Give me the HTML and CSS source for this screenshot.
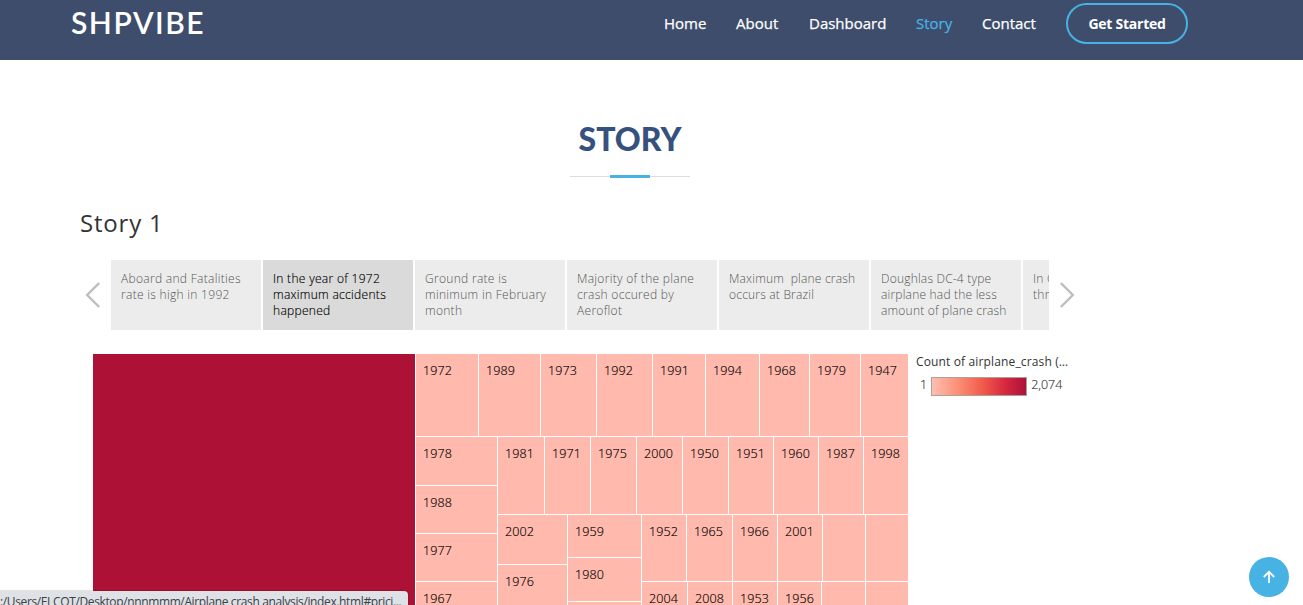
FILE: index.html
```html
<!DOCTYPE html>
<html lang="en">
<head>
<meta charset="utf-8">
<title>SHPVIBE</title>
<link rel="stylesheet" href="styles.css">
</head>
<body>
<header class="header">
  <a class="logo">SHPVIBE</a>
  <nav class="nav">
    <a class="n-home">Home</a><a class="n-about">About</a><a class="n-dash">Dashboard</a><a class="n-story active">Story</a><a class="n-contact">Contact</a>
    <a class="cta">Get Started</a>
  </nav>
</header>
<main class="main">
  <h2 class="section-title">STORY</h2>
  <div class="rule"><span class="rule-accent"></span></div>
  <section class="viz">
    <h3 class="viz-title">Story 1</h3>
    <div class="points">
      <svg class="arrow" width="16" height="28" viewBox="0 0 16 28"><path d="M14.2 2 2.2 14l12 12"/></svg>
      <div class="strip">
        <div class="point">Aboard and Fatalities<br>rate is high in 1992</div>
        <div class="point selected">In the year of 1972<br>maximum accidents<br>happened</div>
        <div class="point">Ground rate is<br>minimum in February<br>month</div>
        <div class="point">Majority of the plane<br>crash occured by<br>Aeroflot</div>
        <div class="point narrow">Maximum &nbsp;plane crash<br>occurs at Brazil</div>
        <div class="point narrow">Doughlas DC-4 type<br>airplane had the less<br>amount of plane crash</div>
        <div class="point">In C<br>thre</div>
      </div>
      <svg class="arrow" width="16" height="28" viewBox="0 0 16 28"><path d="M1.8 2l12 12-12 12"/></svg>
    </div>
    <div class="chart">
      <div class="treemap">
        <div class="big"></div>
        <div class="right">
          <div class="row1"><i>1972</i><i>1989</i><i>1973</i><i>1992</i><i>1991</i><i>1994</i><i>1968</i><i>1979</i><i>1947</i></div>
          <div class="lower">
            <div class="stack stack-a"><i>1978</i><i>1988</i><i>1977</i><i>1967</i></div>
            <div class="rest">
              <div class="row2"><i>1981</i><i>1971</i><i>1975</i><i>2000</i><i>1950</i><i>1951</i><i>1960</i><i>1987</i><i>1998</i></div>
              <div class="row3">
                <div class="stack stack-b"><i>2002</i><i>1976</i></div>
                <div class="stack stack-c"><i>1959</i><i>1980</i><i></i></div>
                <div class="stack stack-d">
                  <div class="row4"><i>1952</i><i>1965</i><i>1966</i><i>2001</i><i></i><i></i></div>
                  <div class="row5"><i>2004</i><i>2008</i><i>1953</i><i>1956</i><i></i><i></i></div>
                </div>
              </div>
            </div>
          </div>
        </div>
      </div>
      <aside class="legend">
        <div class="legend-title">Count of airplane_crash (…</div>
        <div class="legend-scale"><span>1</span><span class="ramp"></span><span>2,074</span></div>
      </aside>
    </div>
  </section>
</main>
<div class="status"><span>:/Users/ELCOT/Desktop/nnnmmm/Airplane crash analysis/index.html#prici...</span></div>
<a class="to-top"><svg width="14" height="14" viewBox="0 0 14 14"><path d="M7 13V2M1.8 7 7 1.8 12.2 7"/></svg></a>
</body>
</html>
```
FILE: styles.css
```css
* { box-sizing: border-box; }
html, body { margin: 0; height: 605px; overflow: hidden; background: #fff; }
body { font-family: "Open Sans", sans-serif; position: relative; }

.header { height: 60px; background: #3e4d6b; display: flex; align-items: flex-start; justify-content: space-between; padding: 0 115px 0 71px; }
.logo { font: 600 30px/44px Lato, sans-serif; letter-spacing: 1.5px; color: #fff; }
.nav { display: flex; align-items: center; padding-top: 3px; color: #fff; font-size: 15px; line-height: 41px; white-space: nowrap; -webkit-text-stroke: 0.25px; }
.n-home { width: 72px; }
.n-about { width: 73px; }
.n-dash { width: 107px; }
.n-story { width: 66px; }
.n-contact { width: 84px; }
.nav .active { color: #47b2e4; }
.cta { width: 122px; height: 41px; border: 2px solid #47b2e4; border-radius: 21px; font-size: 14px; font-weight: 700; letter-spacing: -0.25px; line-height: 37px; text-align: center; -webkit-text-stroke: 0; }

.section-title { margin: 0 43px 0 0; padding-top: 56px; font: 900 32px/46px Lato, sans-serif; color: #37517e; text-align: center; }
.main { height: 545px; overflow: hidden; }
.rule { width: 120px; height: 3px; margin: 13px 0 0 570px; display: flex; justify-content: center; background: linear-gradient(#fff 1px, #ddd 1px, #ddd 2px, #fff 2px); }
.rule-accent { width: 40px; background: #47b2e4; }

.viz { padding-left: 80px; font-weight: 300; }
.viz-title { margin: 27px 0 0; font-size: 24px; font-weight: 400; letter-spacing: 0.8px; line-height: 36px; color: #333; }
.points { display: flex; align-items: center; width: 996px; height: 70px; margin: 19px 0 0 5px; }
.arrow { flex: none; fill: none; stroke: #bdbdbd; stroke-width: 2.4; }
.strip { width: 938px; margin: 0 10px; display: flex; gap: 2px; overflow: hidden; }
.point { flex: none; width: 150px; height: 70px; padding: 11px 0 0 10px; background: #ececec; color: #555; font-size: 12px; letter-spacing: 0.3px; line-height: 16px; white-space: nowrap; }
.narrow { letter-spacing: 0.2px; }
.selected { background: #dadada; color: #000; -webkit-text-stroke: 0.15px; }

.chart { display: flex; margin: 24px 0 0 13px; }
.treemap { display: flex; gap: 1px; width: 815px; height: 260px; font-size: 12.5px; letter-spacing: 0.1px; color: #000; -webkit-text-stroke: 0.15px; }
.treemap i { background: #ffb9ad; font-style: normal; line-height: 16px; padding: 9px 0 0 7px; overflow: hidden; }
.big { width: 322px; background: #ad1236; }
.right { width: 492px; display: grid; grid-template-rows: 82px 1fr; gap: 1px; }
.row1, .row2, .row4, .row5 { display: grid; gap: 1px; }
.row1 { grid-template-columns: 62px 61px 55px 55px 52px 53px 49px 50px 47px; }
.lower { display: grid; grid-template-columns: 81px 410px; gap: 1px; }
.stack { display: grid; gap: 1px; }
.stack-a { grid-template-rows: 48px 47px 47px 1fr; }
.rest { display: grid; grid-template-rows: 77px 1fr; gap: 1px; }
.row2 { grid-template-columns: 46px 45px 45px 45px 45px 44px 44px 44px 44px; }
.row3 { display: grid; grid-template-columns: 69px 73px 266px; gap: 1px; }
.stack-b { grid-template-rows: 49px 1fr; }
.stack-c { grid-template-rows: 42px 43px 1fr; }
.stack-d { grid-template-rows: 66px 1fr; }
.row4 { grid-template-columns: 44px 45px 44px 44px 42px 42px; }
.row5 { grid-template-columns: 45px 44px 44px 43px 43px 42px; }

.legend { margin-left: 8px; color: #333; font-size: 12px; white-space: nowrap; }
.legend-title { line-height: 16px; font-weight: 400; letter-spacing: 0.14px; }
.legend-scale { display: flex; align-items: center; gap: 4px; height: 20px; margin: 6px 0 0 4px; font-size: 12.5px; line-height: 16px; -webkit-text-stroke: 0.15px; }
.legend-scale span:not(.ramp) { padding-bottom: 2px; }
.ramp { width: 96px; height: 19px; border: 1px solid #a8a398; background: linear-gradient(90deg, #ffbeb2, #fb8f75 28%, #f0584a 55%, #d5283f 78%, #ae123a); }

.status { position: absolute; left: 0; bottom: 0; width: 408px; height: 14px; overflow: hidden; border-top-right-radius: 4px; background: #dee1e6; color: #3c4043; font-size: 12px; letter-spacing: -0.37px; line-height: 16px; white-space: nowrap; box-shadow: 0 0 2px #0006; }
.status span { display: block; margin: 3px 0 0; }
.to-top { position: absolute; left: 1249px; top: 557px; width: 40px; height: 40px; border-radius: 50%; background: #47b2e4; display: flex; align-items: center; justify-content: center; }
.to-top svg { fill: none; stroke: #fff; stroke-width: 1.8; }
```
